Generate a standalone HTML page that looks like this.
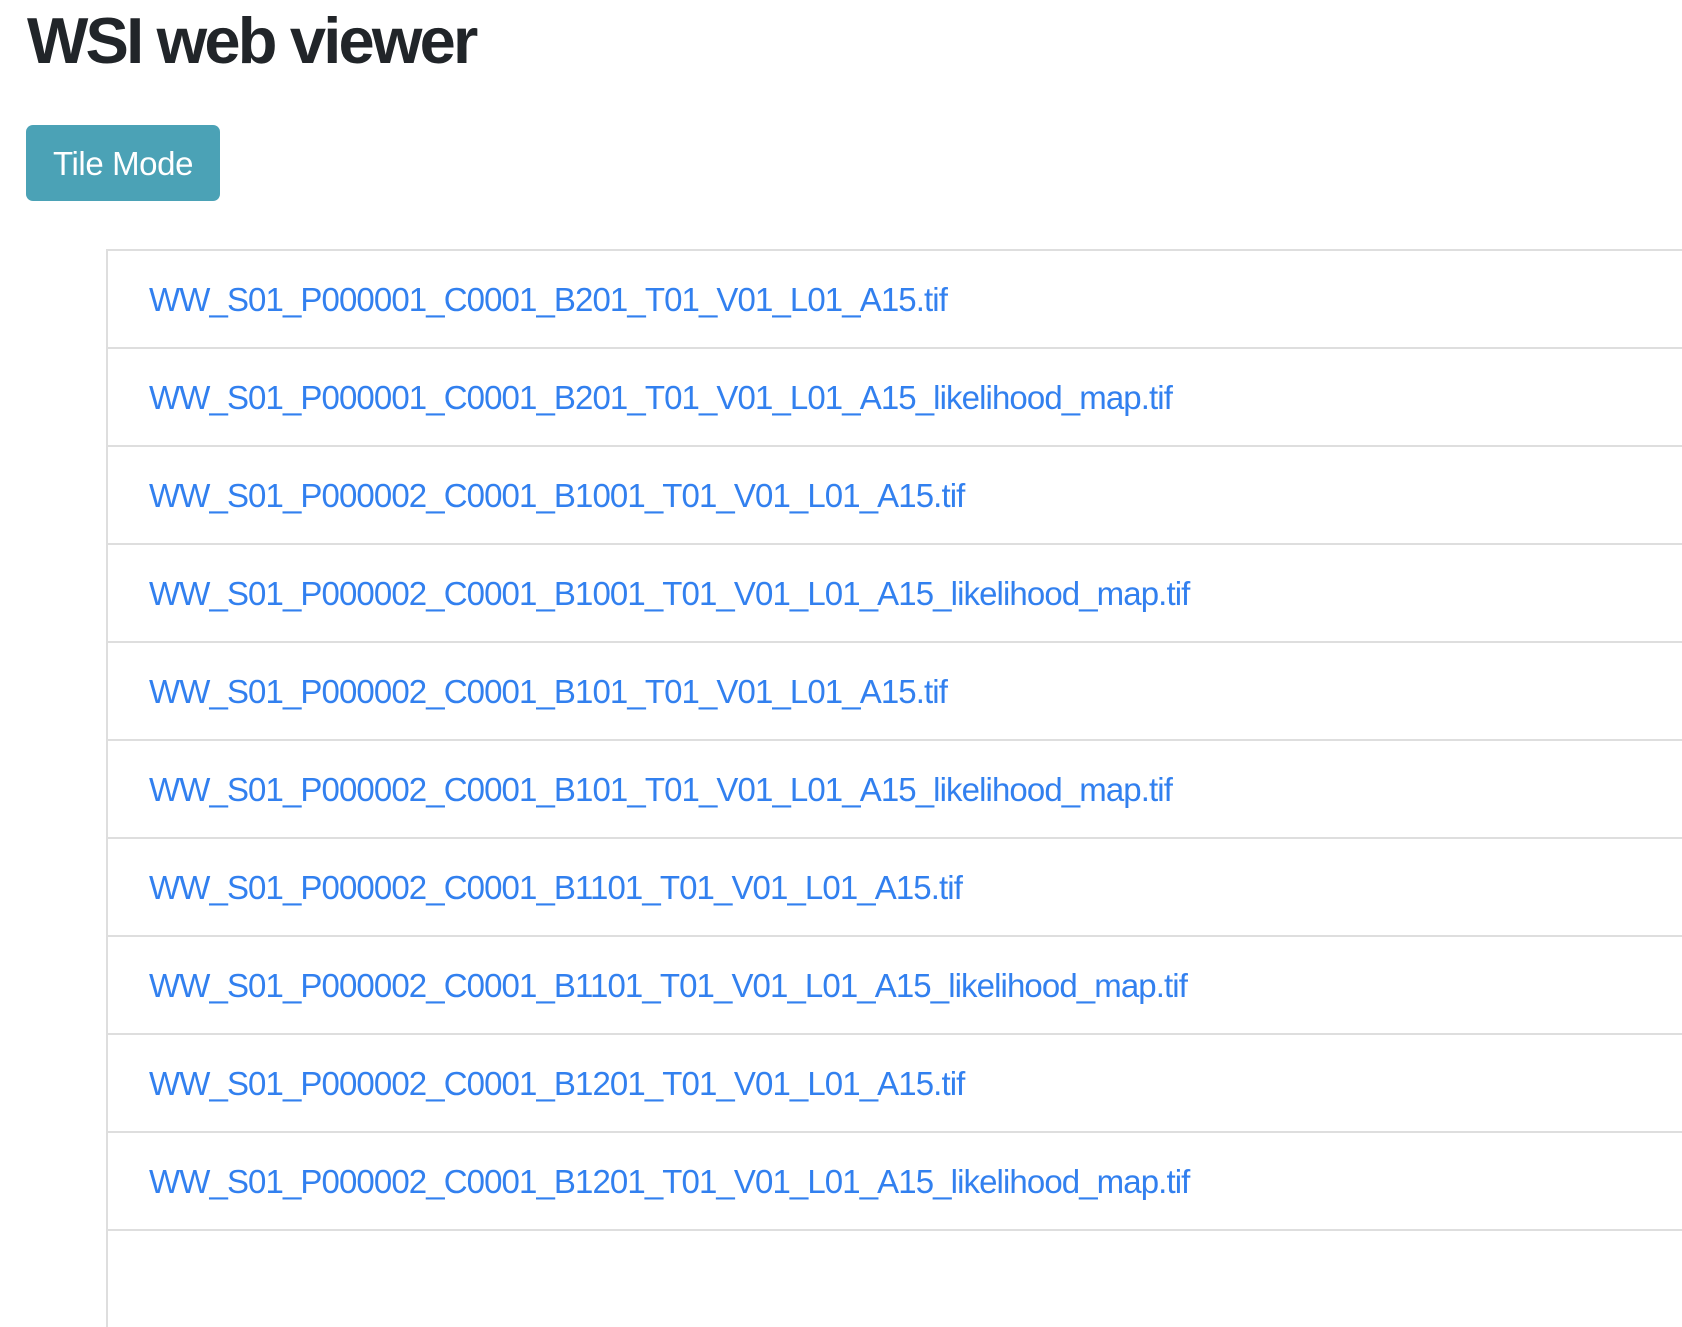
<!DOCTYPE html>
<html><head><meta charset="utf-8"><style>
body{margin:0;background:#fff;font-family:"Liberation Sans",Arial,sans-serif;width:1682px;height:1256px;overflow:hidden;position:relative}
h1{position:absolute;left:27px;top:1px;margin:0;font-size:65px;font-weight:bold;color:#212529;line-height:80px;letter-spacing:-2.8px}
.btn{position:absolute;left:26px;top:125px;width:194px;height:76px;background:#4ba2b6;border-radius:7px;color:#fff;font-size:33px;line-height:78px;text-align:center;letter-spacing:-0.4px}
ul{position:absolute;left:106px;top:249px;right:-10px;margin:0;padding:0;list-style:none}
li{box-sizing:border-box;height:98px;border-top:2px solid #dedede;border-left:2px solid #dedede;padding-left:41px;font-size:33px;line-height:98px;color:#3280ef;letter-spacing:-0.9px}
</style></head><body>
<h1>WSI web viewer</h1>
<div class="btn">Tile Mode</div>
<ul>
<li>WW_S01_P000001_C0001_B201_T01_V01_L01_A15.tif</li>
<li>WW_S01_P000001_C0001_B201_T01_V01_L01_A15_likelihood_map.tif</li>
<li>WW_S01_P000002_C0001_B1001_T01_V01_L01_A15.tif</li>
<li>WW_S01_P000002_C0001_B1001_T01_V01_L01_A15_likelihood_map.tif</li>
<li>WW_S01_P000002_C0001_B101_T01_V01_L01_A15.tif</li>
<li>WW_S01_P000002_C0001_B101_T01_V01_L01_A15_likelihood_map.tif</li>
<li>WW_S01_P000002_C0001_B1101_T01_V01_L01_A15.tif</li>
<li>WW_S01_P000002_C0001_B1101_T01_V01_L01_A15_likelihood_map.tif</li>
<li>WW_S01_P000002_C0001_B1201_T01_V01_L01_A15.tif</li>
<li>WW_S01_P000002_C0001_B1201_T01_V01_L01_A15_likelihood_map.tif</li>
<li></li>
</ul>
</body></html>
